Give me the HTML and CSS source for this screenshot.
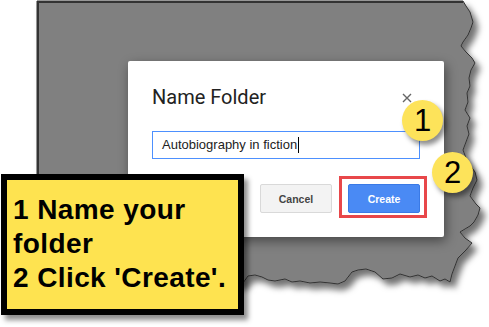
FILE: index.html
```html
<!DOCTYPE html>
<html lang="en">
<head>
  <meta charset="UTF-8">
  <title>Name Folder</title>
  <link rel="stylesheet" href="styles.css">
</head>
<body>
  <div class="page">
    <svg class="torn" width="489" height="327" viewBox="0 0 489 327">
      <defs>
        <filter id="tornShadow" x="-5%" y="-5%" width="115%" height="115%">
          <feDropShadow dx="5" dy="6" stdDeviation="3" flood-color="#000" flood-opacity="0.55"/>
        </filter>
      </defs>
      <polygon filter="url(#tornShadow)" fill="#808080" stroke="#333" stroke-width="1"
        points="37,1 463,1 466,6 470,12 473,22 471,28 468,35 463,42 461,46 466,52 472,58 475,63 471,70 469,78 470,86 467,93 468,102 465,110 470,118 467,126 469,134 466,142 463,150 466,158 470,165 475,172 477,180 473,188 470,196 476,204 480,208 478,215 474,222 470,226 460,232 465,238 472,243 466,250 458,258 455,266 452,274 450,282 445,279 440,281 432,276 425,278 418,275 410,277 400,274 392,278 383,279 375,272 366,269 358,270 352,272 345,281 338,284 330,283 320,282 310,283 300,281 292,282 285,279 275,281 268,280 262,277 255,275 248,276 243,283 230,284 37,285"/>
      <path d="M38 285 V2 H463" fill="none" stroke="#333" stroke-width="2"/>
    </svg>

    <div class="shot">
      <div class="dialog">
        <div class="dialog-head">
          <span class="dialog-title">Name Folder</span>
          <svg class="close" width="10" height="10" viewBox="0 0 10 10">
            <path d="M1 1 L9 9 M9 1 L1 9" stroke="#666" stroke-width="1.4"/>
          </svg>
        </div>
        <div class="field"><span class="field-text">Autobiography in fiction</span></div>
        <div class="actions">
          <button class="btn btn-cancel">Cancel</button>
          <span class="highlight"><button class="btn btn-create">Create</button></span>
        </div>
      </div>
    </div>

    <div class="step step-1">1</div>
    <div class="step step-2">2</div>

    <div class="note">1 Name your folder<br>2 Click 'Create'.</div>
  </div>
</body>
</html>
```

FILE: styles.css
```css
body {
  margin: 0;
  background-color: #fff;
  font-family: Arial, "Liberation Sans", sans-serif;
}
.page {
  position: relative;
  width: 489px;
  height: 327px;
  overflow: hidden;
}
.torn {
  position: absolute;
  top: 0;
  left: 0;
}
.shot {
  position: relative;
  padding: 61px 0 0 128px;
}
.dialog {
  width: 268px;
  padding: 24px 24px 24px 24px;
  background-color: #fff;
  border-radius: 2px;
  box-shadow: 2px 4px 12px rgba(0, 0, 0, 0.45);
}
.dialog-head {
  display: flex;
  justify-content: space-between;
  align-items: center;
  height: 24px;
}
.dialog-title {
  font-family: Roboto, Arial, sans-serif;
  font-size: 20px;
  line-height: 24px;
  color: #222;
}
.close {
  margin-right: 8px;
  margin-top: 2px;
}
.field {
  margin-top: 22px;
  height: 26px;
  border: 1px solid #4d90fe;
  padding-left: 9px;
  display: flex;
  align-items: center;
  font-size: 13px;
  color: #222;
}
.field-text {
  border-right: 1px solid #000;
  padding-right: 1px;
  line-height: 16px;
}
.actions {
  display: flex;
  justify-content: flex-end;
  gap: 16px;
  margin-top: 25px;
}
.btn {
  width: 72px;
  height: 29px;
  border-radius: 2px;
  font-family: Arial, "Liberation Sans", sans-serif;
  font-size: 10.5px;
  font-weight: bold;
  padding: 0;
  display: block;
}
.btn-cancel {
  background-color: #f3f3f3;
  border: 1px solid #d9d9d9;
  color: #444;
}
.btn-create {
  background-color: #4a8af4;
  border: 1px solid #3a7ae6;
  color: #fff;
}
.highlight {
  position: relative;
  display: block;
}
.highlight::after {
  content: "";
  position: absolute;
  top: -8px;
  left: -9px;
  right: -7px;
  bottom: -5px;
  border: 3px solid #e8474a;
}
.step {
  position: absolute;
  width: 41px;
  height: 41px;
  border-radius: 50%;
  background-color: #fde35a;
  box-shadow: 3px 4px 5px rgba(0, 0, 0, 0.45);
  font-size: 31px;
  line-height: 42px;
  text-align: center;
  color: #000;
}
.step-1 {
  left: 402px;
  top: 100px;
}
.step-2 {
  left: 432px;
  top: 152px;
}
.note {
  position: absolute;
  left: 1px;
  top: 174px;
  width: 225px;
  height: 116px;
  padding: 13px 0 0 6px;
  background-color: #fee350;
  border: 6px solid #000;
  box-shadow: 4px 5px 5px rgba(0, 0, 0, 0.45);
  font-size: 28px;
  font-weight: bold;
  line-height: 34px;
  letter-spacing: 0.4px;
  color: #000;
}
```
